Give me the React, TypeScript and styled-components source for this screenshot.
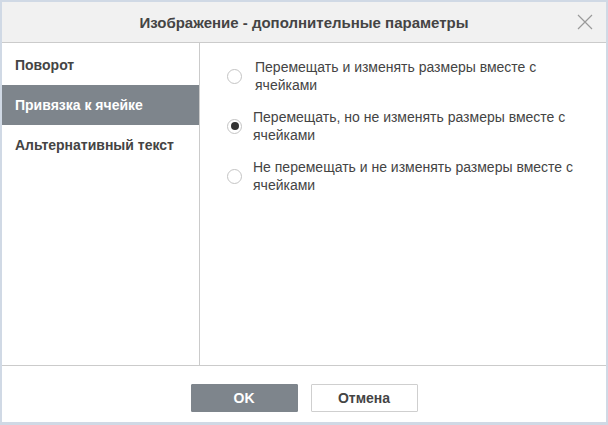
import { useState } from "react";
import styled, { createGlobalStyle } from "styled-components";

const GlobalStyle = createGlobalStyle`
  html, body {
    margin: 0;
    padding: 0;
    background: #d0d9e5;
  }
  * {
    box-sizing: border-box;
  }
`;

const tabs = ["Поворот", "Привязка к ячейке", "Альтернативный текст"];

const options = [
  "Перемещать и изменять размеры вместе с ячейками",
  "Перемещать, но не изменять размеры вместе с ячейками",
  "Не перемещать и не изменять размеры вместе с ячейками",
];

function App() {
  const [tab, setTab] = useState(1);
  const [choice, setChoice] = useState(1);

  return (
    <>
      <GlobalStyle />
      <Frame>
        <Dialog>
          <Header>
            <Title>Изображение - дополнительные параметры</Title>
            <CloseButton aria-label="close">
              <svg width="16" height="16" viewBox="0 0 16 16">
                <path d="M1 1 L15 15 M15 1 L1 15" stroke="#9a9a9a" strokeWidth="1.2" fill="none" />
              </svg>
            </CloseButton>
          </Header>
          <Body>
            <Sidebar>
              {tabs.map((t, i) => (
                <TabItem key={t} $active={tab === i} onClick={() => setTab(i)}>
                  {t}
                </TabItem>
              ))}
            </Sidebar>
            <Content>
              {options.map((o, i) => (
                <Option key={o} onClick={() => setChoice(i)}>
                  <Radio $checked={choice === i} />
                  <OptionText $shift={i === 0}>{o}</OptionText>
                </Option>
              ))}
            </Content>
          </Body>
          <Footer>
            <Button $primary>OK</Button>
            <Button>Отмена</Button>
          </Footer>
        </Dialog>
      </Frame>
    </>
  );
}

const Frame = styled.div`
  width: 608px;
  height: 425px;
  border: 2px solid #d0d9e5;
  border-bottom-width: 3px;
`;
const Dialog = styled.div`
  width: 100%;
  height: 100%;
  background: #fff;
  display: flex;
  flex-direction: column;
  font-family: Arial, "Liberation Sans", sans-serif;
  color: #444;
`;
const Header = styled.div`
  position: relative;
  height: 41px;
  flex-shrink: 0;
  background: #f1f1f1;
  border-bottom: 1px solid #cbcbcb;
  display: flex;
  align-items: center;
  justify-content: center;
`;
const Title = styled.div`
  font-size: 15px;
  font-weight: bold;
  color: #444;
`;
const CloseButton = styled.button`
  position: absolute;
  right: 13px;
  top: 12px;
  width: 16px;
  height: 16px;
  padding: 0;
  border: 0;
  background: transparent;
  display: flex;
  cursor: pointer;
`;
const Body = styled.div`
  height: 323px;
  flex-shrink: 0;
  display: flex;
  border-bottom: 1px solid #cbcbcb;
`;
const Sidebar = styled.div`
  width: 198px;
  flex-shrink: 0;
  border-right: 1px solid #cbcbcb;
  padding-top: 2px;
  display: flex;
  flex-direction: column;
`;
const TabItem = styled.div<{ $active?: boolean }>`
  height: 40px;
  padding-left: 13px;
  display: flex;
  align-items: center;
  font-size: 14px;
  font-weight: bold;
  cursor: pointer;
  color: ${(p) => (p.$active ? "#fff" : "#444")};
  background: ${(p) => (p.$active ? "#7e858c" : "transparent")};
`;
const Content = styled.div`
  flex: 1;
  padding: 15px 0 0 27px;
  display: flex;
  flex-direction: column;
  gap: 14px;
`;
const Option = styled.div`
  display: flex;
  align-items: center;
  gap: 11px;
  cursor: pointer;
`;
const Radio = styled.span<{ $checked?: boolean }>`
  width: 15px;
  height: 15px;
  flex-shrink: 0;
  border-radius: 50%;
  border: 1px solid #c4c4c4;
  background: #fff;
  display: flex;
  align-items: center;
  justify-content: center;
  &::after {
    content: "";
    width: 8px;
    height: 8px;
    border-radius: 50%;
    background: #333;
    display: ${(p) => (p.$checked ? "block" : "none")};
  }
`;
const OptionText = styled.div<{ $shift?: boolean }>`
  max-width: 330px;
  font-size: 14px;
  line-height: 18px;
  color: #444;
  margin-left: ${(p) => (p.$shift ? "2px" : "0")};
`;
const Footer = styled.div`
  flex: 1;
  display: flex;
  justify-content: center;
  gap: 13px;
  padding-top: 18px;
`;
const Button = styled.button<{ $primary?: boolean }>`
  width: 107px;
  height: 28px;
  font-family: Arial, "Liberation Sans", sans-serif;
  font-size: 14px;
  font-weight: bold;
  cursor: pointer;
  border: 1px solid ${(p) => (p.$primary ? "#7e858c" : "#cfcfcf")};
  background: ${(p) => (p.$primary ? "#7e858c" : "#fff")};
  color: ${(p) => (p.$primary ? "#fff" : "#444")};
  border-radius: 1px;
`;

export default App;
